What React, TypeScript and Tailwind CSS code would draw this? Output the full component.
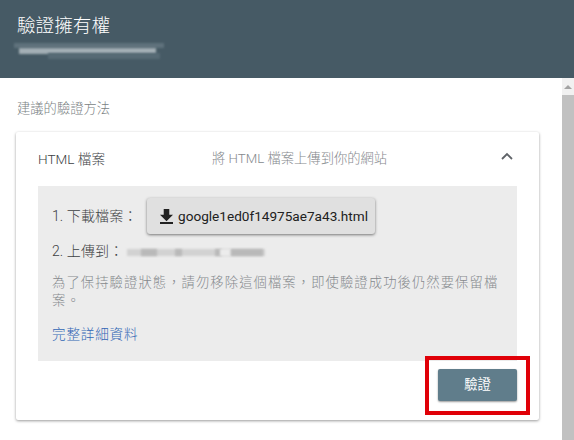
import React from "react";

const FONT = "font-['Roboto','Noto_Sans_CJK_TC',sans-serif]";

function Blur({ className }: { className: string }) {
  return <div className={`blur-[1px] ${className}`} />;
}

export default function App() {
  return (
    <div className={`${FONT} flex h-[440px] w-[574px] flex-col overflow-hidden bg-white`}>
      <header className="flex h-[78px] shrink-0 flex-col bg-[#465a65] pl-[14px] pt-[14px]">
        <h1 className="pl-[3px] text-[18.6px] font-light leading-[24px] text-white">驗證擁有權</h1>
        <div className="relative mt-[3px] h-[20px] w-[150px]">
          <Blur className="absolute left-0 right-0 top-[2px] h-[5px] bg-[#5f727c]" />
          <Blur className="absolute left-[5px] right-[8px] top-[7px] h-[6px] bg-[#a3afb5]" />
          <Blur className="absolute left-[34px] top-[12px] h-[6px] w-[112px] bg-[#566a75]" />
        </div>
      </header>
      <div className="flex min-h-0 flex-1">
        <main className="flex-1 pl-[16px] pr-[23px]">
          <p className="pl-px pt-[22px] text-[13.3px] font-light leading-[18px] text-[#7a7f83]">建議的驗證方法</p>
          <section className="mt-[14px] h-[288px] rounded-[2px] bg-white shadow-[0_1px_3px_rgba(0,0,0,0.4)]">
            <div className="relative flex h-[54px] items-center pl-[22px] pr-[26px]">
              <span className="w-[132px] text-[13.6px] font-light text-[#3c4043]">HTML 檔案</span>
              <span className="ml-[42px] flex-1 text-[13.3px] font-light text-[#85898d]">將 HTML 檔案上傳到你的網站</span>
              <svg viewBox="0 0 12 8" className="mb-[6px] h-[8px] w-[12px]" fill="none" stroke="#5f6368" strokeWidth="1.8">
                <path d="M1 7l5-5 5 5" />
              </svg>
            </div>
            <div className="mx-[22px] h-[175px] bg-[#ececec] pl-[14px] pr-[15px] pt-[12px] text-[14px] font-light">
              <div className="flex items-center text-[#3c4043]">
                <span className="w-[95px] tracking-[0.1px]">1. 下載檔案：</span>
                <button className="flex h-[36px] w-[228px] items-center gap-[5px] rounded-[3px] bg-[#e0e0e0] pl-[13px] text-[13.6px] font-normal text-[#212121] shadow-[0_1px_3px_rgba(0,0,0,0.5)]">
                  <svg viewBox="0 0 14 16" className="h-[15px] w-[13px]" fill="#212121">
                    <path d="M14 6h-4V0H4v6H0l7 7 7-7zM0 14v2h14v-2H0z" />
                  </svg>
                  google1ed0f14975ae7a43.html
                </button>
              </div>
              <div className="mt-[7px] flex items-center text-[#3c4043]">
                <span className="w-[75px] tracking-[0.1px]">2. 上傳到：</span>
                <div className="relative h-[18px] w-[138px]">
                  <Blur className="absolute left-0 top-[6px] h-[7px] w-full bg-[#d2d2d2]" />
                  <Blur className="absolute left-[14px] top-[6px] h-[7px] w-[16px] bg-[#b9b9b9]" />
                  <Blur className="absolute left-[48px] top-[6px] h-[7px] w-[7px] bg-[#b9b9b9]" />
                  <Blur className="absolute left-[88px] top-[6px] h-[7px] w-[7px] bg-[#b9b9b9]" />
                  <Blur className="absolute left-[104px] top-[6px] h-[7px] w-[32px] bg-[#b9b9b9]" />
                  <Blur className="absolute left-[93px] top-[6px] h-[7px] w-[10px] bg-[#ececec]" />
                </div>
              </div>
              <p className="mt-[12px] text-[13.3px] font-light leading-[18px] tracking-[1.1px] text-[#85898d]">
                為了保持驗證狀態，請勿移除這個檔案，即使驗證成功後仍然要保留檔案。
              </p>
              <a className="mt-[14px] block text-[13.6px] font-light tracking-[0.8px] text-[#3367b5]">完整詳細資料</a>
            </div>
            <div className="flex justify-end pr-[22px] pt-[8px]">
              <div className="relative">
                <button className="h-[32px] w-[79px] rounded-[2px] bg-[#607d8b] text-[13.3px] text-white shadow-[0_1px_2px_rgba(0,0,0,0.4)]">驗證</button>
                <div className="absolute -left-[13px] -top-[13px] h-[59px] w-[105px] border-[4px] border-[#e00008]" />
              </div>
            </div>
          </section>
        </main>
        <aside className="flex w-[12px] shrink-0 flex-col">
          <div className="flex h-[17px] items-center justify-center bg-[#f1f1f1]">
            <div className="h-0 w-0 border-x-[4px] border-b-[4px] border-x-transparent border-b-[#a3a3a3]" />
          </div>
          <div className="flex-1 bg-[#c1c1c1]" />
        </aside>
      </div>
    </div>
  );
}
